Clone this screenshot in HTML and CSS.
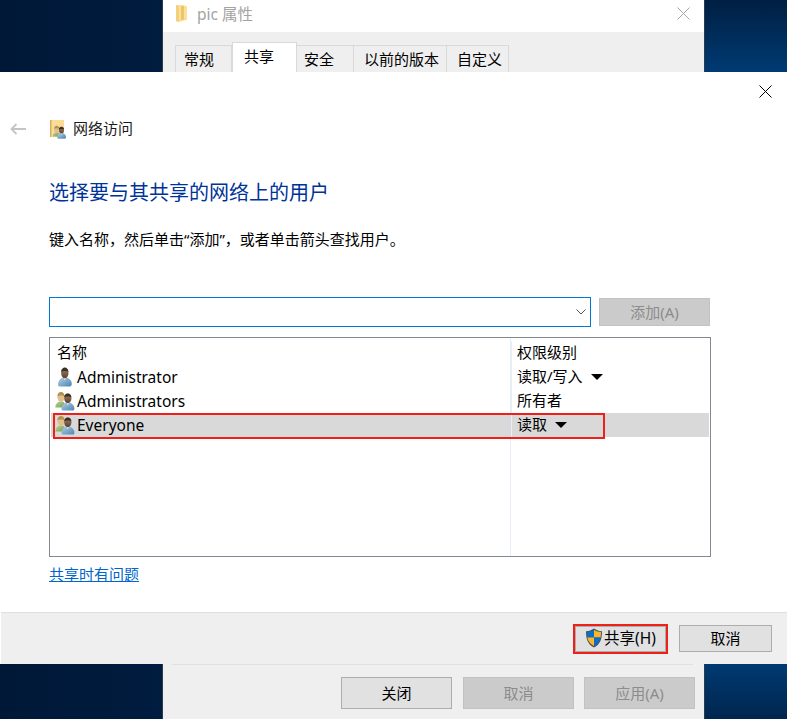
FILE: index.html
```html
<!DOCTYPE html>
<html lang="zh-CN">
<head>
<meta charset="utf-8">
<title>网络访问</title>
<link rel="stylesheet" href="styles.css">
</head>
<body>
<svg class="defs" width="0" height="0" aria-hidden="true">
  <defs>
    <linearGradient id="skin" x1="0" y1="0" x2="0" y2="1"><stop offset="0" stop-color="#a58260"/><stop offset="1" stop-color="#5a4030"/></linearGradient>
    <linearGradient id="shirt" x1="0" y1="0" x2="1" y2="1"><stop offset="0" stop-color="#b4d0e4"/><stop offset="1" stop-color="#4a86b4"/></linearGradient>
    <linearGradient id="green" x1="0" y1="0" x2="1" y2="1"><stop offset="0" stop-color="#c0d69a"/><stop offset="1" stop-color="#6a9c4c"/></linearGradient>
    <symbol id="user" viewBox="0 0 20 20">
      <path d="M5 19.500c-2 0-2.500-2-1.500-4.500C4.500 12 6.500 11 8 10.500h3.500c2 .5 4 2 5 4.500.8 2.500 0 4.500-2 4.500z" fill="url(#shirt)"/>
      <path d="M8.500 10.500l1.300 3 1.300-3z" fill="#e6eef5"/>
      <ellipse cx="9.800" cy="6" rx="3.700" ry="5.200" fill="url(#skin)"/>
      <path d="M6.200 5c0-3 1.800-4.500 3.600-4.500S13.400 2 13.400 5c-1.500-1.300-5.500-1.300-7.200 0z" fill="#3a2f25"/>
    </symbol>
    <symbol id="users" viewBox="0 0 20 20">
      <path d="M.3 16.500c0-3 2-5.500 4-6h3c2 .5 3 2 3 6z" fill="url(#green)"/>
      <ellipse cx="6" cy="6" rx="3.600" ry="4.800" fill="#e0bf8c"/>
      <path d="M2.400 5.500C2.400 2.300 4.300 1 6 1s3.600 1.300 3.600 4.500C8 4.200 4 4.200 2.400 5.500z" fill="#b2924e"/>
      <path d="M8 19.500c-1.500 0-2-1.500-1-4 1-2 2.500-3.500 4-4h3.500c2 .5 3.500 2 4.500 4 .8 2.500.3 4-1 4z" fill="url(#shirt)"/>
      <path d="M11.500 11.500l1.300 3 1.300-3z" fill="#e6eef5"/>
      <ellipse cx="12.800" cy="7.300" rx="3.600" ry="4.900" fill="url(#skin)"/>
      <path d="M9.200 6.500c0-3 1.800-4.100 3.600-4.100s3.600 1.100 3.600 4.100c-1.500-1.200-5.700-1.200-7.200 0z" fill="#3a2f25"/>
    </symbol>
  </defs>
</svg>

<main class="desktop">
  <section class="props">
    <header class="props-title">
      <svg class="folder-icon" viewBox="0 0 13 17" width="13" height="17"><path d="M1 0h7l4 1.500v13.300L4 17l-3-1z" fill="#fbe09a"/><path d="M6 1h3v13.500L6 15z" fill="#eec468"/><path d="M1 0l3 1.200V17l-3-1z" fill="#f5d07c"/></svg>
      <span class="props-name">pic 属性</span>
      <svg class="x-icon props-x" viewBox="0 0 13 13" width="13" height="13"><path d="M.5.5l12 12M12.500.5l-12 12" stroke="#a6a6a6" fill="none"/></svg>
    </header>
    <div class="props-body">
      <nav class="tabs">
        <span class="tab tab-1">常规</span>
        <span class="tab tab-active">共享</span>
        <span class="tab tab-3">安全</span>
        <span class="tab tab-4">以前的版本</span>
        <span class="tab tab-5">自定义</span>
      </nav>
      <div class="props-foot">
        <div class="props-rule"></div>
        <div class="props-actions">
          <button class="btn btn-wide">关闭</button>
          <button class="btn btn-wide btn-off btn-mid">取消</button>
          <button class="btn btn-wide btn-off">应用(A)</button>
        </div>
      </div>
    </div>
  </section>

  <section class="dialog">
    <div class="dlg-top">
      <svg class="x-icon" viewBox="0 0 13 13" width="13" height="13"><path d="M.5.5l12 12M12.500.5l-12 12" stroke="#000" fill="none"/></svg>
    </div>
    <div class="dlg-nav">
      <svg class="back-arrow" viewBox="0 0 16 12" width="16" height="12"><path d="M16 6H1.500M6.500 1L1.500 6l5 5" stroke="#c4c4c4" stroke-width="1.800" fill="none"/></svg>
      <svg class="net-icon" viewBox="0 0 17 19" width="17" height="19">
        <path d="M0 0h14v17H0z" fill="#fbdc96"/><path d="M0 0h1.500v17H0z" fill="#d9ae5e"/>
        <use href="#users" x="2" y="5" width="15" height="14"/>
      </svg>
      <span class="nav-title">网络访问</span>
    </div>
    <h1 class="heading">选择要与其共享的网络上的用户</h1>
    <p class="hint">键入名称，然后单击“添加”，或者单击箭头查找用户。</p>
    <div class="picker">
      <div class="combo">
        <svg viewBox="0 0 10 6" width="10" height="6"><path d="M.5.5L5 5 9.500.5" stroke="#555" fill="none"/></svg>
      </div>
      <button class="btn btn-add btn-off">添加(A)</button>
    </div>
    <div class="list">
      <div class="row row-head"><span class="cell-name"><span class="cjk">名称</span></span><span class="cell-perm"><span class="cjk">权限级别</span></span></div>
      <div class="row">
        <span class="cell-name"><svg class="user-icon" width="20" height="20"><use href="#user"/></svg>Administrator</span>
        <span class="cell-perm"><span class="cjk">读取/写入</span><i class="caret"></i></span>
      </div>
      <div class="row">
        <span class="cell-name"><svg class="user-icon" width="20" height="20"><use href="#users"/></svg>Administrators</span>
        <span class="cell-perm"><span class="cjk">所有者</span></span>
      </div>
      <div class="row row-selected">
        <span class="cell-name"><svg class="user-icon" width="20" height="20"><use href="#users"/></svg>Everyone</span>
        <span class="cell-perm"><span class="cjk">读取</span><i class="caret"></i></span>
      </div>
      <div class="mark mark-row"></div>
    </div>
    <a class="help" href="#">共享时有问题</a>
    <footer class="dlg-foot">
      <button class="btn btn-share"><svg viewBox="0 0 18 20" width="18" height="20"><path d="M9 .5c2.500 1.700 5 2.500 8 2.700 0 7.300-1.500 13-8 16.300C2.500 16.200 1 10.500 1 3.200 4 3 6.500 2.200 9 .5z" fill="#4a5560"/><path d="M9 2v7.500H2.300C2.200 7.500 2 6 2 4.100 4.500 3.800 7 3.200 9 2z" fill="#0a6fc8"/><path d="M9 2c2 1.200 4.500 1.800 7 2.100 0 2-.1 3.400-.4 5.400H9z" fill="#f8b62d"/><path d="M2.300 9.500H9v8.600c-4-2.300-6-5-6.700-8.600z" fill="#f8b62d"/><path d="M9 9.500h6.600c-.7 3.600-2.600 6.300-6.600 8.600z" fill="#0a6fc8"/></svg><span class="share-label">共享(H)</span></button>
      <button class="btn btn-cancel">取消</button>
      <div class="mark mark-share"></div>
    </footer>
  </section>
</main>
</body>
</html>
```

FILE: styles.css
```css
* { box-sizing: border-box; }
html, body { margin: 0; padding: 0; }
body {
  width: 787px;
  height: 719px;
  overflow: hidden;
  font-family: "Noto Sans", "Noto Sans CJK SC", sans-serif;
  font-size: 15px;
  color: #000;
}
.defs { position: absolute; }

.desktop {
  position: relative;
  width: 787px;
  height: 719px;
  overflow: hidden;
  background:
    linear-gradient(90deg, rgba(0, 24, 56, 1) 0, rgba(0, 28, 62, 1) 163px, rgba(0, 44, 92, .0) 704px),
    linear-gradient(180deg, #001f42 0, #003a72 70px, #003a72 664px, #00264f 719px);
}

/* property sheet behind */
.props {
  position: absolute;
  left: 162px;
  top: 0;
  width: 543px;
  height: 719px;
  display: flex;
  flex-direction: column;
  border-left: 1px solid #2c3c50;
  border-right: 1px solid #2c3c50;
  background: #fff;
}
.props-title {
  height: 32px;
  display: flex;
  align-items: center;
  padding: 0 0 5px 12px;
  flex: none;
}
.folder-icon { flex: none; }
.props-name {
  margin-left: 9px;
  font-size: 15.5px;
  color: #a3a3a3;
}
.props-x { margin-left: auto; margin-right: 14px; }
.props-body {
  flex: 1;
  background: #efefef;
  display: flex;
  flex-direction: column;
  justify-content: space-between;
}
.tabs {
  display: flex;
  align-items: flex-end;
  height: 40px;
  padding-left: 12px;
}
.tab {
  height: 27px;
  line-height: 27px;
  text-align: left;
  border: 1px solid #d9d9d9;
  border-bottom: 0;
  border-left: 0;
  font-size: 15px;
  white-space: nowrap;
}
.tab-1 { width: 57px; border-left: 1px solid #d9d9d9; padding-left: 8px; }
.tab-active { width: 65px; height: 30px; background: #fff; line-height: 26px; border-left: 1px solid #d9d9d9; padding-left: 11px; }
.tab-3 { width: 57px; padding-left: 7px; }
.tab-4 { width: 93px; padding-left: 10px; }
.tab-5 { width: 62px; padding-left: 10px; }
.props-rule {
  height: 1px;
  margin: 0 11px 0 9px;
  background: #e0e0e0;
}
.props-actions {
  display: flex;
  justify-content: flex-end;
  gap: 10px;
  padding: 12px 9px 10px 0;
}
.btn-mid { margin-left: 1px; }

/* buttons */
.btn {
  font: inherit;
  color: #000;
  background: #e1e1e1;
  border: 1px solid #adadad;
  padding: 0;
  display: inline-flex;
  align-items: center;
  justify-content: center;
}
.btn-wide { width: 111px; height: 32px; font-size: 15px; padding-bottom: 2px; }
.btn-off { background: #cbcbcb; border-color: #c2c2c2; color: #8c8c8c; }

/* front dialog */
.dialog {
  position: absolute;
  left: 0;
  top: 72px;
  width: 787px;
  height: 592px;
  background: #fff;
  display: flex;
  flex-direction: column;
}
.dlg-top {
  height: 38px;
  display: flex;
  align-items: center;
  justify-content: flex-end;
  padding-right: 15px;
  flex: none;
}
.dlg-nav {
  height: 38px;
  display: flex;
  align-items: center;
  padding-left: 10px;
  flex: none;
}
.net-icon { margin-left: 24px; flex: none; }
.nav-title { margin: 0 0 4px 6px; font-size: 15px; color: #1a1a1a; }
.heading {
  margin: 29px 0 0 49px;
  font-size: 20px;
  line-height: 32px;
  font-weight: 400;
  color: #003399;
}
.hint {
  margin: 18px 0 0 49px;
  line-height: 24px;
  font-size: 15px;
}
.picker {
  margin: 46px 0 0 49px;
  display: flex;
  align-items: center;
  gap: 8px;
}
.combo {
  width: 542px;
  height: 30px;
  border: 1px solid #0078d7;
  display: flex;
  align-items: center;
  justify-content: flex-end;
  padding-right: 4px;
}
.btn-add { width: 111px; height: 28px; font-size: 15px; padding-bottom: 2px; }

.list {
  position: relative;
  margin: 10px 0 0 49px;
  width: 662px;
  height: 220px;
  border: 1px solid #828790;
  padding: 3px 1px 0;
  background: linear-gradient(#e6eef6, #e6eef6) 460px 0 / 1px 100% no-repeat;
}
.row {
  display: flex;
  height: 24px;
  align-items: center;
}
.cell-name {
  width: 460px;
  flex: none;
  display: flex;
  align-items: center;
  padding-left: 6px;
  font-size: 15.5px;
}
.row-head .cell-name { font-size: 15px; }
.cell-perm {
  flex: 1;
  display: flex;
  align-items: center;
  padding-left: 5px;
  border-left: 1px solid #e6eef6;
}
.cjk { margin-bottom: 4px; }
.user-icon { margin: 0 2px 0 -2px; flex: none; }
.row-selected { background: #d9d9d9; }
.caret {
  width: 0;
  height: 0;
  margin-left: 8px;
  border-style: solid;
  border-width: 6px 6px 0;
  border-color: #000 transparent transparent;
}

.help {
  margin: 5px 0 0 49px;
  line-height: 24px;
  color: #0066cc;
  align-self: flex-start;
}

.dlg-foot {
  position: relative;
  margin: auto 0 0 1px;
  height: 52px;
  background: #efefef;
  border-top: 1px solid #dfdfdf;
  display: flex;
  align-items: flex-start;
  justify-content: flex-end;
  padding: 12px 15px 0 0;
  gap: 13px;
}
.btn-share {
  width: 91px;
  height: 26px;
  margin-top: 1px;
  padding: 0 0 3px 9px;
  font-size: 15.5px;
  justify-content: flex-start;
}
.share-label { margin-left: 1px; font-weight: 400; }
.btn-cancel { width: 93px; height: 27px; font-size: 15px; padding-bottom: 3px; }

/* red annotations over the screenshot */
.mark {
  position: absolute;
  border: 2px solid #f02018;
  pointer-events: none;
}
.mark-row { left: 3px; top: 75px; width: 552px; height: 26px; }
.mark-share { right: 119px; top: 11px; width: 95px; height: 30px; }
```
